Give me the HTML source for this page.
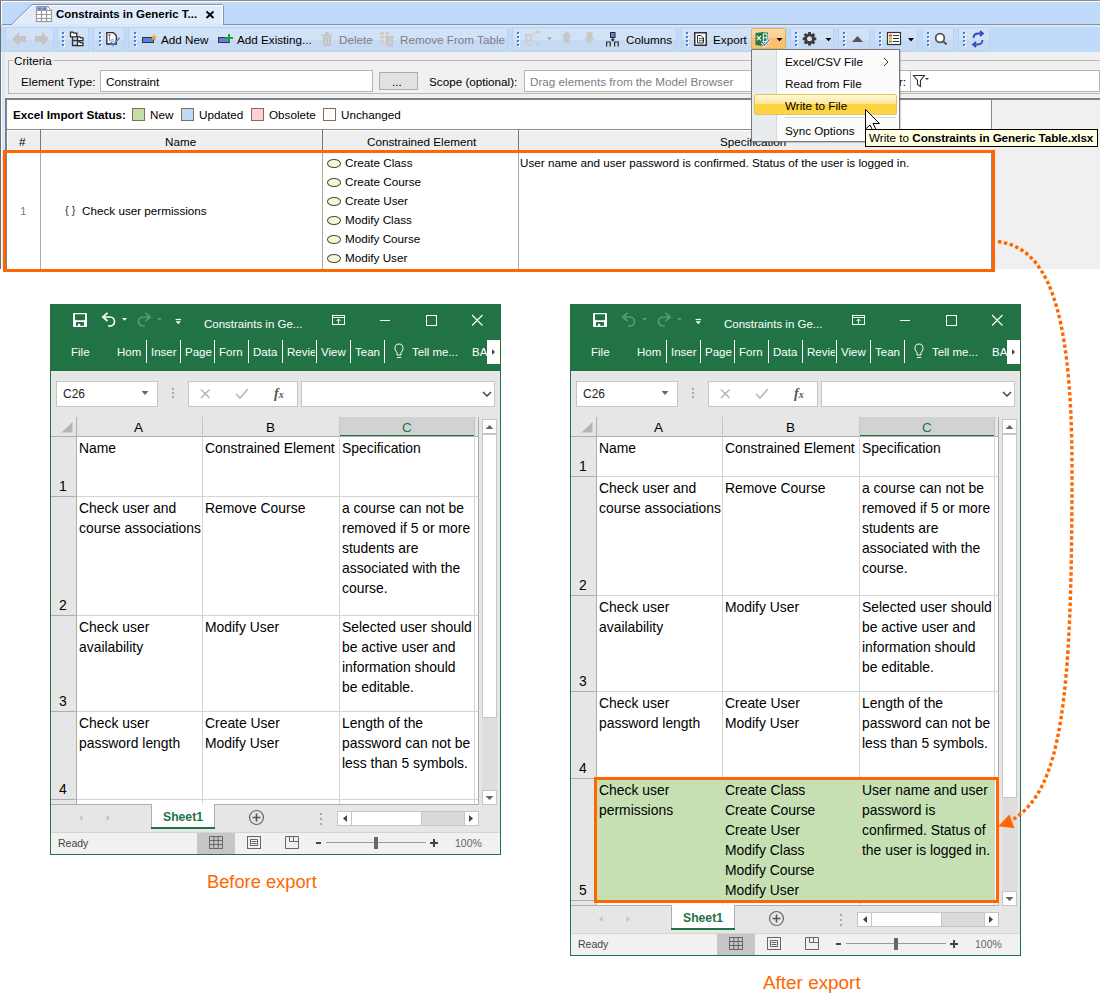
<!DOCTYPE html>
<html><head><meta charset="utf-8">
<style>
*{box-sizing:border-box;margin:0;padding:0}
html,body{width:1100px;height:1007px;overflow:hidden;background:#fff;font-family:"Liberation Sans",sans-serif;color:#000}
.a{position:absolute}
.t{position:absolute;white-space:nowrap;font-size:11.7px;line-height:14px}
.dis{color:#7d7d86}
.tbg{top:27px;height:25px;background:linear-gradient(#d1e2f7 0,#d1e2f7 52%,#c6daf3 52%,#c6daf3 100%);border:1px solid #b9d3f4}
.grip{top:31px;width:2px;height:15px;background:repeating-linear-gradient(#5a8fd8 0,#5a8fd8 2px,#fff 2px,#fff 4px)}
</style></head><body>

<!-- ============ MagicDraw window ============ -->
<div class="a" style="left:0;top:0;width:1100px;height:269px;background:#f0f0f0;border-top:1px solid #8c8c8c;border-left:1px solid #6e6e6e"></div>
<div class="a" style="left:1px;top:24px;width:4px;height:245px;background:#d8e7fb;border-left:1px solid #fff"></div>
<!-- tab strip -->
<div class="a" style="left:1px;top:1px;width:1099px;height:23px;background:#bfdafa;border-top:1px solid #fff;border-left:1px solid #fff"></div>
<div class="a" style="left:2px;top:24px;width:1098px;height:1px;background:#8c9298"></div>
<!-- tab -->
<div class="a" style="left:1px;top:25px;width:1099px;height:27px;background:linear-gradient(#d8e7fb 0,#d8e7fb 2px,#c0dafa 2px)"></div>
<svg class="a" style="left:0;top:0" width="240" height="27">
  <path d="M2 24.5 L11.5 24.5 L32 4.5 L221 4.5 Q223.5 4.5 223.5 7 L223.5 24.5 L240 24.5" fill="none" stroke="#8c9298" stroke-width="1"/>
  <path d="M12.5 25.5 L32.5 5.5 L222.5 5.5 L222.5 25.5 L12 27 Z" fill="#e0ecfc"/>
  <path d="M13 24.5 L32.5 5.5 L222.5 5.5 L222.5 24" fill="none" stroke="#fff" stroke-width="1"/>
  <rect x="12" y="24" width="211" height="3" fill="#d8e7fb"/>
</svg>

<div class="t" style="left:56px;top:7px;font-weight:bold;font-size:11.45px">Constraints in Generic T...</div>
<svg class="a" style="left:0;top:0" width="240" height="26">
 <rect x="36.5" y="6.5" width="15" height="15" fill="#fff" stroke="#9a9a9a" stroke-width="1.2"/>
 <path d="M41.5 6.5 v15 M46.5 6.5 v15 M36.5 10.5 h15 M36.5 14.5 h15 M36.5 18.5 h15" stroke="#9a9a9a" stroke-width="1.2"/>
 <rect x="37.3" y="7.3" width="3.6" height="2.6" fill="#5577e8"/>
 <rect x="42.3" y="7.3" width="3.6" height="2.6" fill="#5577e8"/>
 <path d="M48 6 h4 v4z" fill="#e3eefc"/>
 <path d="M47.5 6.5 l4 4" stroke="#9a9a9a" stroke-width="1"/>
 <path d="M206.5 11.5 l7 6.5 M213.5 11.5 l-7 6.5" stroke="#000" stroke-width="1.9"/>
</svg>
<!-- toolbar -->


<!-- toolbar groups -->
<div class="a tbg" style="left:5px;width:49px"></div>
<div class="a tbg" style="left:57px;width:32px"></div>
<div class="a tbg" style="left:93px;width:32px"></div>
<div class="a tbg" style="left:128px;width:380px"></div>
<div class="a tbg" style="left:512px;width:165px"></div>
<div class="a tbg" style="left:681px;width:106px"></div>
<div class="a tbg" style="left:790px;width:44px"></div>
<div class="a tbg" style="left:838px;width:32px"></div>
<div class="a tbg" style="left:874px;width:44px"></div>
<div class="a tbg" style="left:922px;width:32px"></div>
<div class="a tbg" style="left:958px;width:32px"></div>
<svg class="a" style="left:62px;top:31px" width="4" height="17"><rect x="1" y="2" width="2" height="2" fill="#fff"/><rect x="0" y="1" width="2" height="2" fill="#3f7fd6"/><rect x="1" y="6" width="2" height="2" fill="#fff"/><rect x="0" y="5" width="2" height="2" fill="#3f7fd6"/><rect x="1" y="10" width="2" height="2" fill="#fff"/><rect x="0" y="9" width="2" height="2" fill="#3f7fd6"/><rect x="1" y="14" width="2" height="2" fill="#fff"/><rect x="0" y="13" width="2" height="2" fill="#3f7fd6"/></svg>
<svg class="a" style="left:99px;top:31px" width="4" height="17"><rect x="1" y="2" width="2" height="2" fill="#fff"/><rect x="0" y="1" width="2" height="2" fill="#3f7fd6"/><rect x="1" y="6" width="2" height="2" fill="#fff"/><rect x="0" y="5" width="2" height="2" fill="#3f7fd6"/><rect x="1" y="10" width="2" height="2" fill="#fff"/><rect x="0" y="9" width="2" height="2" fill="#3f7fd6"/><rect x="1" y="14" width="2" height="2" fill="#fff"/><rect x="0" y="13" width="2" height="2" fill="#3f7fd6"/></svg>
<svg class="a" style="left:134px;top:31px" width="4" height="17"><rect x="1" y="2" width="2" height="2" fill="#fff"/><rect x="0" y="1" width="2" height="2" fill="#3f7fd6"/><rect x="1" y="6" width="2" height="2" fill="#fff"/><rect x="0" y="5" width="2" height="2" fill="#3f7fd6"/><rect x="1" y="10" width="2" height="2" fill="#fff"/><rect x="0" y="9" width="2" height="2" fill="#3f7fd6"/><rect x="1" y="14" width="2" height="2" fill="#fff"/><rect x="0" y="13" width="2" height="2" fill="#3f7fd6"/></svg>
<svg class="a" style="left:517px;top:31px" width="4" height="17"><rect x="1" y="2" width="2" height="2" fill="#fff"/><rect x="0" y="1" width="2" height="2" fill="#3f7fd6"/><rect x="1" y="6" width="2" height="2" fill="#fff"/><rect x="0" y="5" width="2" height="2" fill="#3f7fd6"/><rect x="1" y="10" width="2" height="2" fill="#fff"/><rect x="0" y="9" width="2" height="2" fill="#3f7fd6"/><rect x="1" y="14" width="2" height="2" fill="#fff"/><rect x="0" y="13" width="2" height="2" fill="#3f7fd6"/></svg>
<svg class="a" style="left:686px;top:31px" width="4" height="17"><rect x="1" y="2" width="2" height="2" fill="#fff"/><rect x="0" y="1" width="2" height="2" fill="#3f7fd6"/><rect x="1" y="6" width="2" height="2" fill="#fff"/><rect x="0" y="5" width="2" height="2" fill="#3f7fd6"/><rect x="1" y="10" width="2" height="2" fill="#fff"/><rect x="0" y="9" width="2" height="2" fill="#3f7fd6"/><rect x="1" y="14" width="2" height="2" fill="#fff"/><rect x="0" y="13" width="2" height="2" fill="#3f7fd6"/></svg>
<svg class="a" style="left:795px;top:31px" width="4" height="17"><rect x="1" y="2" width="2" height="2" fill="#fff"/><rect x="0" y="1" width="2" height="2" fill="#3f7fd6"/><rect x="1" y="6" width="2" height="2" fill="#fff"/><rect x="0" y="5" width="2" height="2" fill="#3f7fd6"/><rect x="1" y="10" width="2" height="2" fill="#fff"/><rect x="0" y="9" width="2" height="2" fill="#3f7fd6"/><rect x="1" y="14" width="2" height="2" fill="#fff"/><rect x="0" y="13" width="2" height="2" fill="#3f7fd6"/></svg>
<svg class="a" style="left:843px;top:31px" width="4" height="17"><rect x="1" y="2" width="2" height="2" fill="#fff"/><rect x="0" y="1" width="2" height="2" fill="#3f7fd6"/><rect x="1" y="6" width="2" height="2" fill="#fff"/><rect x="0" y="5" width="2" height="2" fill="#3f7fd6"/><rect x="1" y="10" width="2" height="2" fill="#fff"/><rect x="0" y="9" width="2" height="2" fill="#3f7fd6"/><rect x="1" y="14" width="2" height="2" fill="#fff"/><rect x="0" y="13" width="2" height="2" fill="#3f7fd6"/></svg>
<svg class="a" style="left:879px;top:31px" width="4" height="17"><rect x="1" y="2" width="2" height="2" fill="#fff"/><rect x="0" y="1" width="2" height="2" fill="#3f7fd6"/><rect x="1" y="6" width="2" height="2" fill="#fff"/><rect x="0" y="5" width="2" height="2" fill="#3f7fd6"/><rect x="1" y="10" width="2" height="2" fill="#fff"/><rect x="0" y="9" width="2" height="2" fill="#3f7fd6"/><rect x="1" y="14" width="2" height="2" fill="#fff"/><rect x="0" y="13" width="2" height="2" fill="#3f7fd6"/></svg>
<svg class="a" style="left:927px;top:31px" width="4" height="17"><rect x="1" y="2" width="2" height="2" fill="#fff"/><rect x="0" y="1" width="2" height="2" fill="#3f7fd6"/><rect x="1" y="6" width="2" height="2" fill="#fff"/><rect x="0" y="5" width="2" height="2" fill="#3f7fd6"/><rect x="1" y="10" width="2" height="2" fill="#fff"/><rect x="0" y="9" width="2" height="2" fill="#3f7fd6"/><rect x="1" y="14" width="2" height="2" fill="#fff"/><rect x="0" y="13" width="2" height="2" fill="#3f7fd6"/></svg>
<svg class="a" style="left:963px;top:31px" width="4" height="17"><rect x="1" y="2" width="2" height="2" fill="#fff"/><rect x="0" y="1" width="2" height="2" fill="#3f7fd6"/><rect x="1" y="6" width="2" height="2" fill="#fff"/><rect x="0" y="5" width="2" height="2" fill="#3f7fd6"/><rect x="1" y="10" width="2" height="2" fill="#fff"/><rect x="0" y="9" width="2" height="2" fill="#3f7fd6"/><rect x="1" y="14" width="2" height="2" fill="#fff"/><rect x="0" y="13" width="2" height="2" fill="#3f7fd6"/></svg>

<!-- toolbar icons -->
<svg class="a" style="left:0;top:24px" width="1000" height="28">
 <!-- back / fwd -->
 <path d="M12 15 L19 8 L19 12 L26 12 L26 18 L19 18 L19 22 Z" fill="#c4c4c4"/>
 <path d="M49 15 L42 8 L42 12 L35 12 L35 18 L42 18 L42 22 Z" fill="#c4c4c4"/>
 <!-- tree icon -->
 <g fill="#fff" stroke="#2a2a2a" stroke-width="1.3">
  <path d="M72.5 12.5 v9 h5 M72.5 16.5 h5" fill="none" stroke="#333"/>
  <path d="M70.5 8.2 h2.5 l1 1 h2.8 v3.6 h-6.3z"/>
  <path d="M77.5 12.8 h2.3 l1 1 h2.2 v2.8 h-5.5z"/>
  <path d="M77.5 17.8 h2.3 l1 1 h2.2 v2.8 h-5.5z"/>
 </g>
 <!-- doc with check -->
 <path d="M106.8 8.6 h6.5 l3 3 v8.4 h-9.5z" fill="#fff" stroke="#2a2a2a" stroke-width="1.3"/>
 <path d="M109.5 10.5 v6.5 M109.5 10 l-1 1 1 1 1-1z M112.5 15 l-1.5 1.5 1.5 1.5 1.5-1.5z" fill="none" stroke="#666" stroke-width="0.8"/>
 <path d="M110.8 18 l2.2 3.2 l6.5-7.5" fill="none" stroke="#4a86cf" stroke-width="1.7"/>
 <!-- add new -->
 <rect x="142.5" y="13.5" width="11" height="5" fill="#5a7fe0" stroke="#333" stroke-width="1"/>
 <path d="M154 10 l1 2.2 2.3.3-1.7 1.6.5 2.3-2.1-1.1-2.1 1.1.5-2.3-1.7-1.6 2.3-.3z" fill="#f5a623"/>
 <!-- add existing -->
 <rect x="218.5" y="13.5" width="11" height="5" fill="#5a7fe0" stroke="#333" stroke-width="1"/>
 <path d="M228 10 h2 v3 h3 v2 h-3 v3 h-2 v-3 h-3 v-2 h3z" fill="#1aa33a"/>
 <!-- trash disabled -->
 <path d="M322 10.5 h10 v2 h-10z M325.5 8 h3 v2.5 h-3z" fill="#c4c4c4"/>
 <path d="M323 13 h8 v8 q0 1-1 1 h-6 q-1 0-1-1z" fill="#c4c4c4"/>
 <path d="M325.5 14.5 v5.5 M328.5 14.5 v5.5" stroke="#d8d8d8" stroke-width="1"/>
 <!-- remove from table disabled -->
 <rect x="380" y="8" width="9" height="11" fill="#cdcdcd"/>
 <path d="M380 11.5 h9 M380 15 h9 M384.5 8 v11" stroke="#e2e2e2" stroke-width="1"/>
 <path d="M385 12 h9 v2 h-9z" fill="#c4c4c4"/>
 <path d="M386 14.5 h7 v7 q0 1-1 1 h-5 q-1 0-1-1z" fill="#c4c4c4"/>
 <path d="M388.3 15.5 v5 M390.7 15.5 v5" stroke="#d8d8d8" stroke-width="1"/>
 <!-- group5 disabled icon -->
 <rect x="525" y="10" width="7" height="7.5" fill="#cfcfcf"/>
 <path d="M528.5 11.8 v4 M526.5 13.8 h4" stroke="#e6e6e6" stroke-width="1"/>
 <path d="M532.5 10 h3 M532.5 17.5 h3" stroke="#d0d0d0" stroke-width="1"/>
 <path d="M535 9 l2.5-3 l2.5 3z M535 18.5 l2.5 3 l2.5-3z" fill="#cacaca"/>
 <path d="M537.5 10 v8" stroke="#d4d4d4" stroke-width="1" stroke-dasharray="1.5 1.5"/>
 <path d="M526 19 q2.5 3 5.5 1.5" fill="none" stroke="#cacaca" stroke-width="1"/>
 <path d="M547 13.5 h5 l-2.5 2.5z" fill="#9a9a9a"/>
 <path d="M566.5 7 l5.5 5.5 h-2.5 v6.5 h-6 v-6.5 h-2.5z" fill="#c8c8c8"/>
 <path d="M589.5 20 l5.5-5.5 h-2.5 v-6.5 h-6 v6.5 h-2.5z" fill="#c8c8c8"/>
 <!-- columns icon -->
 <rect x="610.5" y="8.5" width="4.5" height="5" fill="#5a82e6" stroke="#2a2a2a" stroke-width="1"/>
 <path d="M612.8 13.5 v3.5" stroke="#2a2a2a" stroke-width="1.2"/>
 <path d="M610.6 15.3 l2.2 2.4 l2.2-2.4z" fill="#2a2a2a"/>
 <path d="M606.6 22.5 v-4.5 h3.6 v4.5 M614.6 22.5 v-4.5 h3.6 v4.5" fill="none" stroke="#2a2a2a" stroke-width="1.2"/>
 <!-- export icon -->
 <rect x="694" y="8" width="13" height="14" fill="#333"/>
 <rect x="695.5" y="9.5" width="10" height="11" fill="#fff"/>
 <path d="M697.5 11.5 h3.5 l2.5 2.5 v5 h-6z" fill="none" stroke="#333" stroke-width="1"/>
 <rect x="699" y="14" width="1.6" height="1.2" fill="#333"/><rect x="701.4" y="14" width="1.6" height="1.2" fill="#333"/>
 <rect x="699" y="16.2" width="1.6" height="1.2" fill="#333"/><rect x="701.4" y="16.2" width="1.6" height="1.2" fill="#333"/>
</svg>
<!-- excel button highlight -->
<div class="a" style="left:751px;top:28px;width:35px;height:21px;border:1px solid #e5b25e;border-radius:2px;background:linear-gradient(#fcd7a8 0,#fbcf98 45%,#f9bd6c 50%,#f8c273 100%)"></div>
<svg class="a" style="left:0;top:24px" width="1000" height="28">
 <!-- excel icon -->
 <path d="M755.5 9 l8-1 v14 l-8-1z" fill="#1f7a44"/>
 <rect x="762" y="8.5" width="6" height="12" fill="#1f7a44"/>
 <rect x="763.3" y="10" width="3.6" height="7.5" fill="none" stroke="#fff" stroke-width="1"/>
 <path d="M763.3 13.7 h3.6" stroke="#fff" stroke-width="1"/>
 <path d="M756.8 11.8 l4.2 4.6 M761 11.8 l-4.2 4.6" stroke="#fff" stroke-width="1.2"/>
 <path d="M762 18.3 l2.5 3.2 l5.2-6" fill="none" stroke="#fff" stroke-width="2.8"/>
 <path d="M762 18.3 l2.5 3.2 l5.2-6" fill="none" stroke="#5d8ed6" stroke-width="1.4"/>
 <path d="M776.5 14 h6 l-3 3.2z" fill="#000"/>
 <!-- gear -->
 <g transform="translate(809.5,14.8)" fill="#3a3a3a">
  <circle r="3.9" fill="none" stroke="#3a3a3a" stroke-width="2.8"/>
  <rect x="-1.4" y="-6.8" width="2.8" height="13.6"/>
  <rect x="-6.8" y="-1.4" width="13.6" height="2.8"/>
  <rect x="-1.4" y="-6.8" width="2.8" height="13.6" transform="rotate(45)"/>
  <rect x="-1.4" y="-6.8" width="2.8" height="13.6" transform="rotate(-45)"/>
  <circle r="2.5" fill="#d3e4f9"/>
 </g>
 <path d="M825.5 14 h6 l-3 3.2z" fill="#000"/>
 <!-- up triangle -->
 <path d="M852 18 l5.5-6 l5.5 6z" fill="#555"/>
 <!-- list icon -->
 <rect x="887.5" y="8.5" width="13" height="12" fill="#fff" stroke="#333" stroke-width="1.2"/>
 <rect x="889" y="10.5" width="3" height="2" fill="#e83a2a"/>
 <rect x="889" y="13.5" width="3" height="2" fill="#f7941d"/>
 <rect x="889" y="16.5" width="3" height="2" fill="#5cb531"/>
 <path d="M893 11.5 h6 M893 14.5 h6 M893 17.5 h6" stroke="#333" stroke-width="1"/>
 <path d="M908 14 h6 l-3 3.5z" fill="#000"/>
 <!-- magnifier -->
 <circle cx="940" cy="14" r="4.3" fill="#fff" stroke="#555" stroke-width="1.8"/>
 <path d="M943 17 l3.5 3.5" stroke="#555" stroke-width="2"/>
 <!-- refresh -->
 <path d="M973.5 14 q0-4.5 5-4.5 h3 M980 7 l3 2.5 -3 2.5" fill="none" stroke="#2f4fbf" stroke-width="1.8"/>
 <path d="M982.5 16 q0 4.5 -5 4.5 h-3 M976 18 l-3 2.5 3 2.5" fill="none" stroke="#2f4fbf" stroke-width="1.8"/>
</svg>
<div class="t" style="left:161px;top:33px">Add New</div>
<div class="t" style="left:237px;top:33px">Add Existing...</div>
<div class="t dis" style="left:339px;top:33px">Delete</div>
<div class="t dis" style="left:400px;top:33px">Remove From Table</div>
<div class="t" style="left:626px;top:33px">Columns</div>
<div class="t" style="left:713px;top:33px">Export</div>

<!-- criteria -->
<div class="a" style="left:8px;top:60px;width:1092px;height:34px;border:1px solid #b9b9b9;border-right:none"></div>
<div class="t" style="left:13px;top:54px;background:#f0f0f0;padding:0 1px">Criteria</div>
<div class="t" style="left:21px;top:75px">Element Type:</div>
<div class="a" style="left:100px;top:70px;width:273px;height:22px;background:#fff;border:1px solid #b4b4b4"></div>
<div class="t" style="left:106px;top:75px">Constraint</div>
<div class="a" style="left:379px;top:72px;width:39px;height:18px;background:#e1e1e1;border:1px solid #adadad"></div>
<div class="t" style="left:392px;top:75px">...</div>
<div class="t" style="left:429px;top:75px">Scope (optional):</div>
<div class="a" style="left:524px;top:70px;width:576px;height:22px;background:#fff;border:1px solid #b4b4b4"></div>
<div class="t dis" style="left:530px;top:75px">Drag elements from the Model Browser</div>

<!-- filter -->
<div class="t" style="left:870px;top:75px;width:36px;text-align:right">Filter:</div>
<div class="a" style="left:910px;top:70px;width:190px;height:22px;background:#fff;border:1px solid #b4b4b4"></div>
<svg class="a" style="left:912px;top:72px" width="20" height="18"><path d="M1.5 3.5 h11 l-4 5 v6 l-3-2 v-4z" fill="none" stroke="#333" stroke-width="1.1"/><path d="M13 6 h4 l-2 2z" fill="#333"/></svg>

<!-- table panel -->
<div class="a" style="left:5px;top:98px;width:1095px;height:171px;background:#f0f0f0;border-top:2px solid #7c8088;border-left:2px solid #7c8088"></div>
<div class="a" style="left:7px;top:100px;width:985px;height:169px;background:#fff"></div>
<div class="a" style="left:991px;top:100px;width:1px;height:169px;background:#8a8a8a"></div>
<div class="t" style="left:13px;top:108px;font-weight:bold">Excel Import Status:</div>
<div class="a" style="left:132px;top:108px;width:13px;height:13px;background:#c4dfa8;border:1px solid #8a6a50"></div>
<div class="t" style="left:150px;top:108px">New</div>
<div class="a" style="left:181px;top:108px;width:13px;height:13px;background:#bddaf7;border:1px solid #8a6a50"></div>
<div class="t" style="left:199px;top:108px">Updated</div>
<div class="a" style="left:251px;top:108px;width:13px;height:13px;background:#fcd0d6;border:1px solid #8a6a50"></div>
<div class="t" style="left:269px;top:108px">Obsolete</div>
<div class="a" style="left:323px;top:108px;width:13px;height:13px;background:#fff;border:1px solid #8a6a50"></div>
<div class="t" style="left:341px;top:108px">Unchanged</div>

<!-- table header -->
<div class="a" style="left:7px;top:129px;width:985px;height:22px;background:#efefef;border-top:1px solid #8a8a8a;box-shadow:inset 1px 1px 0 #fff"></div>
<div class="a" style="left:40px;top:130px;width:1px;height:20px;background:#777"></div>
<div class="a" style="left:322px;top:130px;width:1px;height:20px;background:#777"></div>
<div class="a" style="left:518px;top:130px;width:1px;height:20px;background:#777"></div>
<div class="a" style="left:40px;top:150px;width:1px;height:119px;background:#a8a8a8"></div>
<div class="a" style="left:322px;top:150px;width:1px;height:119px;background:#a8a8a8"></div>
<div class="a" style="left:518px;top:150px;width:1px;height:119px;background:#a8a8a8"></div>
<div class="t" style="left:19px;top:135px">#</div>
<div class="t" style="left:165px;top:135px">Name</div>
<div class="t" style="left:367px;top:135px">Constrained Element</div>
<div class="t" style="left:720px;top:135px">Specification</div>

<!-- row -->
<div class="t" style="left:20px;top:204px;color:#7a7a90">1</div>
<div class="t" style="left:65px;top:203px;font-size:11px;color:#333">{ }</div>
<div class="t" style="left:82px;top:204px">Check user permissions</div>
<div class="t" style="left:345px;top:156px">Create Class</div>
<div class="t" style="left:345px;top:175px">Create Course</div>
<div class="t" style="left:345px;top:194px">Create User</div>
<div class="t" style="left:345px;top:213px">Modify Class</div>
<div class="t" style="left:345px;top:232px">Modify Course</div>
<div class="t" style="left:345px;top:251px">Modify User</div>
<div class="t" style="left:520px;top:156px">User name and user password is confirmed. Status of the user is logged in.</div>

<div class="a" style="left:327px;top:159px;width:14px;height:9px;border-radius:50%;background:#fbf7d2;border:1px solid #4a4a4a"></div>
<div class="a" style="left:327px;top:178px;width:14px;height:9px;border-radius:50%;background:#fbf7d2;border:1px solid #4a4a4a"></div>
<div class="a" style="left:327px;top:197px;width:14px;height:9px;border-radius:50%;background:#fbf7d2;border:1px solid #4a4a4a"></div>
<div class="a" style="left:327px;top:216px;width:14px;height:9px;border-radius:50%;background:#fbf7d2;border:1px solid #4a4a4a"></div>
<div class="a" style="left:327px;top:235px;width:14px;height:9px;border-radius:50%;background:#fbf7d2;border:1px solid #4a4a4a"></div>
<div class="a" style="left:327px;top:254px;width:14px;height:9px;border-radius:50%;background:#fbf7d2;border:1px solid #4a4a4a"></div>

<!-- orange highlight -->
<div class="a" style="left:3px;top:150px;width:992px;height:122px;border:3px solid #ff6600"></div>


<!-- menu -->
<div class="a" style="left:751px;top:49px;width:149px;height:93px;background:#fcfcfc;border:1px solid #777;box-shadow:1px 1px 1px rgba(0,0,0,0.15)"></div>
<div class="a" style="left:752px;top:50px;width:25px;height:91px;background:#e8ecee;border-right:1px solid #d5d9dc"></div>
<div class="a" style="left:754px;top:94px;width:143px;height:21px;border:1px solid #e6c262;border-radius:2px;background:linear-gradient(#fff8d8 0,#fde99a 45%,#fcd23e 50%,#fbd545 100%)"></div>
<div class="a" style="left:785px;top:117px;width:111px;height:1px;background:#d8d8d8"></div>
<div class="t" style="left:785px;top:55px">Excel/CSV File</div>
<svg class="a" style="left:882px;top:57px" width="8" height="10"><path d="M2 1 l4 4 -4 4" fill="none" stroke="#333" stroke-width="1"/></svg>
<div class="t" style="left:785px;top:77px">Read from File</div>
<div class="t" style="left:785px;top:99px">Write to File</div>
<div class="t" style="left:785px;top:124px">Sync Options</div>
<!-- cursor -->
<svg class="a" style="left:864px;top:108px" width="20" height="26"><path d="M1.5 1.5 L1.5 21 L6 17 L9.5 24 L12.5 22.5 L9 15.5 L15.5 15.5 Z" fill="#fff" stroke="#000" stroke-width="1"/></svg>
<!-- tooltip -->
<div class="a" style="left:865px;top:129px;width:233px;height:18px;background:#ffffe1;border:1px solid #000"></div>
<div class="t" style="left:869px;top:131px;font-size:11.7px">Write to <b style="letter-spacing:-0.1px">Constraints in Generic Table.xlsx</b></div>


<!-- excel left -->
<div class="a" style="left:50px;top:304px;width:451px;height:551px;background:#e6e6e6;border:1px solid #217346"></div>
<div class="a" style="left:50px;top:304px;width:451px;height:67px;background:#217346"></div>
<svg class="a" style="left:50px;top:304px" width="451" height="67">
 <rect x="23" y="9" width="14" height="14" rx="0.8" fill="#fff"/>
 <path d="M25 10.2 h10 v5.3 l-1 0.8 h-8 l-1-0.8z" fill="#217346"/>
 <rect x="26" y="18" width="8" height="3.8" fill="#217346"/>
 <rect x="28" y="19.8" width="2.2" height="2.2" fill="#fff"/>
 <g fill="none" stroke="#fff" stroke-width="1.7">
  <path d="M53 13 H60 A4.5 4.5 0 0 1 60 22 H58"/>
  <path d="M57.5 8.8 L52.8 13 L57.5 17"/>
 </g>
 <path d="M72 14 h5 l-2.5 2.7z" fill="#fff"/>
 <g fill="none" stroke="#5b9b74" stroke-width="1.7">
  <path d="M100 13 H93 A4.5 4.5 0 0 0 93 22 H95"/>
  <path d="M95.5 8.8 L100.2 13 L95.5 17"/>
 </g>
 <path d="M107 14 h5 l-2.5 2.7z" fill="#5b9b74"/>
 <path d="M125.6 15.5 h5.4" stroke="#fff" stroke-width="1.2"/>
 <path d="M125.6 17.3 h5.4 l-2.7 3z" fill="#fff"/>
 <rect x="282.5" y="11.5" width="12" height="9" fill="none" stroke="#fff" stroke-width="1"/>
 <path d="M282.5 13.5 h12" stroke="#fff" stroke-width="1"/>
 <path d="M288.5 19.5 v-4.5 M286.5 17 l2-2 2 2" fill="none" stroke="#fff" stroke-width="1"/>
 <path d="M330 16.5 h10" stroke="#fff" stroke-width="1"/>
 <rect x="376.5" y="11.5" width="10" height="10" fill="none" stroke="#fff" stroke-width="1"/>
 <path d="M422 11 l10.5 10.5 M432.5 11 l-10.5 10.5" stroke="#fff" stroke-width="1.1"/>
 <path d="M96.5 36 v23" stroke="#fff" stroke-width="1"/>
 <path d="M130.5 36 v23" stroke="#fff" stroke-width="1"/>
 <path d="M164.5 36 v23" stroke="#fff" stroke-width="1"/>
 <path d="M198.5 36 v23" stroke="#fff" stroke-width="1"/>
 <path d="M232.5 36 v23" stroke="#fff" stroke-width="1"/>
 <path d="M266.5 36 v23" stroke="#fff" stroke-width="1"/>
 <path d="M300.5 36 v23" stroke="#fff" stroke-width="1"/>
 <path d="M334.5 36 v23" stroke="#fff" stroke-width="1"/>
 <path d="M349 40 q-4 0-4 4.5 q0 2.5 2 4 v2.5 h4 v-2.5 q2-1.5 2-4 q0-4.5-4-4.5z M347 53.5 h4" fill="none" stroke="#fff" stroke-width="1"/>
 <rect x="437" y="36" width="13" height="24" fill="#fff"/>
 <path d="M442 45 l3 3 -3 3z" fill="#444"/>
</svg>
<div class="t" style="left:204px;top:317px;color:#fff;font-size:12px;font-size:11.5px">Constraints in Ge...</div>
<div class="t" style="left:71px;top:345px;color:#fff;font-size:12px;font-size:11.5px">File</div>
<div class="t" style="left:117px;top:345px;width:28px;overflow:hidden;color:#fff;font-size:12px;font-size:11.5px">Hom</div>
<div class="t" style="left:151px;top:345px;width:28px;overflow:hidden;color:#fff;font-size:12px;font-size:11.5px">Inser</div>
<div class="t" style="left:185px;top:345px;width:28px;overflow:hidden;color:#fff;font-size:12px;font-size:11.5px">Page</div>
<div class="t" style="left:219px;top:345px;width:28px;overflow:hidden;color:#fff;font-size:12px;font-size:11.5px">Forn</div>
<div class="t" style="left:253px;top:345px;width:28px;overflow:hidden;color:#fff;font-size:12px;font-size:11.5px">Data</div>
<div class="t" style="left:287px;top:345px;width:28px;overflow:hidden;color:#fff;font-size:12px;font-size:11.5px">Revie</div>
<div class="t" style="left:321px;top:345px;width:28px;overflow:hidden;color:#fff;font-size:12px;font-size:11.5px">View</div>
<div class="t" style="left:355px;top:345px;width:28px;overflow:hidden;color:#fff;font-size:12px;font-size:11.5px">Tean</div>
<div class="t" style="left:412px;top:345px;color:#fff;font-size:12px;font-size:11.5px">Tell me...</div>
<div class="t" style="left:472px;top:345px;width:15px;overflow:hidden;color:#fff;font-size:12px;font-size:11.5px">BA</div>
<div class="a" style="left:56px;top:381px;width:102px;height:26px;background:#fff;border:1px solid #c6c6c6"></div>
<div class="t" style="left:63px;top:387px;font-size:12px;color:#222">C26</div>
<div class="a" style="left:188px;top:381px;width:110px;height:26px;background:#fff;border:1px solid #c6c6c6"></div>
<div class="t" style="left:274px;top:387px;font-family:&quot;Liberation Serif&quot;,serif;font-size:14px;color:#555"><i><b>f</b><b style="font-size:10px">x</b></i></div>
<div class="a" style="left:301px;top:381px;width:194px;height:26px;background:#fff;border:1px solid #c6c6c6"></div>
<svg class="a" style="left:50px;top:374px" width="451" height="40">
 <path d="M91.5 17 h7 l-3.5 4z" fill="#666"/>
 <g fill="#aaa"><rect x="122" y="14" width="2" height="2"/><rect x="122" y="18" width="2" height="2"/><rect x="122" y="22" width="2" height="2"/></g>
 <path d="M151 15.5 l8.5 8.5 M159.5 15.5 l-8.5 8.5" stroke="#b0b0b0" stroke-width="1.4"/>
 <path d="M186 20 l4 4 l8-9" fill="none" stroke="#b8b8b8" stroke-width="1.7"/>
 <path d="M433 18 l4 4 4-4" fill="none" stroke="#444" stroke-width="1.5"/>
</svg>
<div class="a" style="left:51px;top:417px;width:427px;height:387px;background:#fff"></div>
<div class="a" style="left:51px;top:417px;width:427px;height:20px;background:#e6e6e6"></div>
<div class="a" style="left:339px;top:417px;width:135px;height:20px;background:#d2d2d2;border-bottom:2px solid #217346"></div>
<div class="a" style="left:51px;top:436px;width:26px;height:368px;background:#e6e6e6"></div>
<svg class="a" style="left:50px;top:417px" width="30" height="20"><path d="M11.5 15.5 h11 v-10.5z" fill="#b5b5b5"/></svg>
<div class="a" style="left:76px;top:417px;width:1px;height:387px;background:#aeaeae"></div>
<div class="a" style="left:51px;top:436px;width:427px;height:1px;background:#aeaeae"></div>
<div class="a" style="left:202px;top:417px;width:1px;height:20px;background:#c6c6c6"></div>
<div class="a" style="left:202px;top:437px;width:1px;height:367px;background:#d4d4d4"></div>
<div class="a" style="left:339px;top:417px;width:1px;height:20px;background:#c6c6c6"></div>
<div class="a" style="left:339px;top:437px;width:1px;height:367px;background:#d4d4d4"></div>
<div class="a" style="left:474px;top:417px;width:1px;height:20px;background:#c6c6c6"></div>
<div class="a" style="left:474px;top:437px;width:1px;height:367px;background:#d4d4d4"></div>
<div class="a" style="left:478px;top:417px;width:1px;height:387px;background:#aeaeae"></div>
<div class="t" style="left:134px;top:421px;font-size:13.5px;line-height:14px">A</div>
<div class="t" style="left:266px;top:421px;font-size:13.5px;line-height:14px">B</div>
<div class="t" style="left:402px;top:421px;font-size:13.5px;line-height:14px;color:#217346">C</div>
<div class="a" style="left:77px;top:496px;width:401px;height:1px;background:#d4d4d4"></div>
<div class="a" style="left:51px;top:496px;width:26px;height:1px;background:#aeaeae"></div>
<div class="t" style="left:59px;top:476px;font-size:13.9px;line-height:20px">1</div>
<div class="t" style="left:79px;top:438px;font-size:13.9px;line-height:20px">Name</div>
<div class="t" style="left:205px;top:438px;font-size:13.9px;line-height:20px">Constrained Element</div>
<div class="t" style="left:342px;top:438px;font-size:13.9px;line-height:20px">Specification</div>
<div class="a" style="left:77px;top:615px;width:401px;height:1px;background:#d4d4d4"></div>
<div class="a" style="left:51px;top:615px;width:26px;height:1px;background:#aeaeae"></div>
<div class="t" style="left:59px;top:595px;font-size:13.9px;line-height:20px">2</div>
<div class="t" style="left:79px;top:498px;font-size:13.9px;line-height:20px">Check user and<br>course associations</div>
<div class="t" style="left:205px;top:498px;font-size:13.9px;line-height:20px">Remove Course</div>
<div class="t" style="left:342px;top:498px;font-size:13.9px;line-height:20px">a course can not be<br>removed if 5 or more<br>students are<br>associated with the<br>course.</div>
<div class="a" style="left:77px;top:711px;width:401px;height:1px;background:#d4d4d4"></div>
<div class="a" style="left:51px;top:711px;width:26px;height:1px;background:#aeaeae"></div>
<div class="t" style="left:59px;top:691px;font-size:13.9px;line-height:20px">3</div>
<div class="t" style="left:79px;top:617px;font-size:13.9px;line-height:20px">Check user<br>availability</div>
<div class="t" style="left:205px;top:617px;font-size:13.9px;line-height:20px">Modify User</div>
<div class="t" style="left:342px;top:617px;font-size:13.9px;line-height:20px">Selected user should<br>be active user and<br>information should<br>be editable.</div>
<div class="a" style="left:77px;top:799px;width:401px;height:1px;background:#d4d4d4"></div>
<div class="a" style="left:51px;top:799px;width:26px;height:1px;background:#aeaeae"></div>
<div class="t" style="left:59px;top:779px;font-size:13.9px;line-height:20px">4</div>
<div class="t" style="left:79px;top:713px;font-size:13.9px;line-height:20px">Check user<br>password length</div>
<div class="t" style="left:205px;top:713px;font-size:13.9px;line-height:20px">Create User<br>Modify User</div>
<div class="t" style="left:342px;top:713px;font-size:13.9px;line-height:20px">Length of the<br>password can not be<br>less than 5 symbols.</div>
<div class="a" style="left:482px;top:419px;width:15px;height:386px;background:#dedede"></div>
<div class="a" style="left:482px;top:419px;width:15px;height:15px;background:#fff;border:1px solid #c6c6c6"></div>
<div class="a" style="left:482px;top:434px;width:15px;height:284px;background:#fff;border:1px solid #c6c6c6"></div>
<div class="a" style="left:482px;top:790px;width:15px;height:15px;background:#fff;border:1px solid #c6c6c6"></div>
<svg class="a" style="left:482px;top:419px" width="15" height="15"><path d="M3.5 10 h8 l-4-4z" fill="#666"/></svg>
<svg class="a" style="left:482px;top:790px" width="15" height="15"><path d="M3.5 6 h8 l-4 4z" fill="#666"/></svg>
<div class="a" style="left:51px;top:804px;width:428px;height:1px;background:#aeaeae"></div>
<div class="a" style="left:51px;top:805px;width:449px;height:27px;background:#e6e6e6"></div>
<div class="a" style="left:151px;top:804px;width:64px;height:25px;background:#fff;border-left:1px solid #aeaeae;border-right:1px solid #aeaeae"></div>
<div class="a" style="left:151px;top:827px;width:64px;height:2px;background:#217346"></div>
<div class="t" style="left:163px;top:810px;font-weight:bold;font-size:12.2px;color:#217346">Sheet1</div>
<svg class="a" style="left:50px;top:804px" width="451" height="28">
 <path d="M32.5 10.5 l-3.5 3.5 3.5 3.5z" fill="#c6c6c6"/>
 <path d="M56.5 10.5 l3.5 3.5 -3.5 3.5z" fill="#c6c6c6"/>
 <circle cx="206.5" cy="13.5" r="7" fill="none" stroke="#666" stroke-width="1.2"/>
 <path d="M202.5 13.5 h8 M206.5 9.5 v8" stroke="#555" stroke-width="1.6"/>
 <g fill="#aaa"><rect x="270" y="9" width="2" height="2"/><rect x="270" y="14" width="2" height="2"/><rect x="270" y="19" width="2" height="2"/></g>
</svg>
<div class="a" style="left:337px;top:811px;width:142px;height:15px;background:#dadada;border:1px solid #c6c6c6"></div>
<div class="a" style="left:337px;top:811px;width:15px;height:15px;background:#fff;border:1px solid #c6c6c6"></div>
<div class="a" style="left:351px;top:811px;width:71px;height:15px;background:#fff;border:1px solid #c6c6c6"></div>
<div class="a" style="left:464px;top:811px;width:15px;height:15px;background:#fff;border:1px solid #c6c6c6"></div>
<svg class="a" style="left:50px;top:804px" width="451" height="28">
 <path d="M297 11 l-4 3.5 4 3.5z" fill="#444"/>
 <path d="M419 11 l4 3.5 -4 3.5z" fill="#444"/>
</svg>
<div class="a" style="left:51px;top:832px;width:449px;height:22px;background:#f1f1f1;border-top:1px solid #d4d4d4"></div>
<div class="t" style="left:58px;top:836px;font-size:10.5px;color:#444">Ready</div>
<div class="a" style="left:197px;top:833px;width:38px;height:21px;background:#c6c6c6"></div>
<svg class="a" style="left:50px;top:832px" width="451" height="22">
 <g fill="none" stroke="#666" stroke-width="1">
  <rect x="159.5" y="4.5" width="13" height="12"/>
  <path d="M163.8 4.5 v12 M168.2 4.5 v12 M159.5 8.5 h13 M159.5 12.5 h13"/>
  <rect x="197.5" y="4.5" width="13" height="12"/>
  <path d="M200.5 7.5 h7 v6 h-7z M201.5 9.5 h5 M201.5 11.5 h5"/>
  <path d="M235.5 16.5 v-12 h13 v12z M239.5 4.5 v5 h4 v-5 M243.5 9.5 h5"/>
 </g>
 <path d="M266 11 h5" stroke="#444" stroke-width="2"/>
 <path d="M276 10.5 h100" stroke="#999" stroke-width="1"/>
 <rect x="324" y="5" width="4" height="12" fill="#666"/>
 <path d="M380 11 h8 M384 7 v8" stroke="#444" stroke-width="2"/>
</svg>
<div class="t" style="left:455px;top:836px;font-size:10.5px;color:#666">100%</div>
<!-- excel right -->
<div class="a" style="left:570px;top:304px;width:451px;height:652px;background:#e6e6e6;border:1px solid #217346"></div>
<div class="a" style="left:570px;top:304px;width:451px;height:67px;background:#217346"></div>
<svg class="a" style="left:570px;top:304px" width="451" height="67">
 <rect x="23" y="9" width="14" height="14" rx="0.8" fill="#fff"/>
 <path d="M25 10.2 h10 v5.3 l-1 0.8 h-8 l-1-0.8z" fill="#217346"/>
 <rect x="26" y="18" width="8" height="3.8" fill="#217346"/>
 <rect x="28" y="19.8" width="2.2" height="2.2" fill="#fff"/>
 <g fill="none" stroke="#5b9b74" stroke-width="1.7">
  <path d="M53 13 H60 A4.5 4.5 0 0 1 60 22 H58"/>
  <path d="M57.5 8.8 L52.8 13 L57.5 17"/>
 </g>
 <path d="M72 14 h5 l-2.5 2.7z" fill="#5b9b74"/>
 <g fill="none" stroke="#5b9b74" stroke-width="1.7">
  <path d="M100 13 H93 A4.5 4.5 0 0 0 93 22 H95"/>
  <path d="M95.5 8.8 L100.2 13 L95.5 17"/>
 </g>
 <path d="M107 14 h5 l-2.5 2.7z" fill="#5b9b74"/>
 <path d="M125.6 15.5 h5.4" stroke="#fff" stroke-width="1.2"/>
 <path d="M125.6 17.3 h5.4 l-2.7 3z" fill="#fff"/>
 <rect x="282.5" y="11.5" width="12" height="9" fill="none" stroke="#fff" stroke-width="1"/>
 <path d="M282.5 13.5 h12" stroke="#fff" stroke-width="1"/>
 <path d="M288.5 19.5 v-4.5 M286.5 17 l2-2 2 2" fill="none" stroke="#fff" stroke-width="1"/>
 <path d="M330 16.5 h10" stroke="#fff" stroke-width="1"/>
 <rect x="376.5" y="11.5" width="10" height="10" fill="none" stroke="#fff" stroke-width="1"/>
 <path d="M422 11 l10.5 10.5 M432.5 11 l-10.5 10.5" stroke="#fff" stroke-width="1.1"/>
 <path d="M96.5 36 v23" stroke="#fff" stroke-width="1"/>
 <path d="M130.5 36 v23" stroke="#fff" stroke-width="1"/>
 <path d="M164.5 36 v23" stroke="#fff" stroke-width="1"/>
 <path d="M198.5 36 v23" stroke="#fff" stroke-width="1"/>
 <path d="M232.5 36 v23" stroke="#fff" stroke-width="1"/>
 <path d="M266.5 36 v23" stroke="#fff" stroke-width="1"/>
 <path d="M300.5 36 v23" stroke="#fff" stroke-width="1"/>
 <path d="M334.5 36 v23" stroke="#fff" stroke-width="1"/>
 <path d="M349 40 q-4 0-4 4.5 q0 2.5 2 4 v2.5 h4 v-2.5 q2-1.5 2-4 q0-4.5-4-4.5z M347 53.5 h4" fill="none" stroke="#fff" stroke-width="1"/>
 <rect x="437" y="36" width="13" height="24" fill="#fff"/>
 <path d="M442 45 l3 3 -3 3z" fill="#444"/>
</svg>
<div class="t" style="left:724px;top:317px;color:#fff;font-size:12px;font-size:11.5px">Constraints in Ge...</div>
<div class="t" style="left:591px;top:345px;color:#fff;font-size:12px;font-size:11.5px">File</div>
<div class="t" style="left:637px;top:345px;width:28px;overflow:hidden;color:#fff;font-size:12px;font-size:11.5px">Hom</div>
<div class="t" style="left:671px;top:345px;width:28px;overflow:hidden;color:#fff;font-size:12px;font-size:11.5px">Inser</div>
<div class="t" style="left:705px;top:345px;width:28px;overflow:hidden;color:#fff;font-size:12px;font-size:11.5px">Page</div>
<div class="t" style="left:739px;top:345px;width:28px;overflow:hidden;color:#fff;font-size:12px;font-size:11.5px">Forn</div>
<div class="t" style="left:773px;top:345px;width:28px;overflow:hidden;color:#fff;font-size:12px;font-size:11.5px">Data</div>
<div class="t" style="left:807px;top:345px;width:28px;overflow:hidden;color:#fff;font-size:12px;font-size:11.5px">Revie</div>
<div class="t" style="left:841px;top:345px;width:28px;overflow:hidden;color:#fff;font-size:12px;font-size:11.5px">View</div>
<div class="t" style="left:875px;top:345px;width:28px;overflow:hidden;color:#fff;font-size:12px;font-size:11.5px">Tean</div>
<div class="t" style="left:932px;top:345px;color:#fff;font-size:12px;font-size:11.5px">Tell me...</div>
<div class="t" style="left:992px;top:345px;width:15px;overflow:hidden;color:#fff;font-size:12px;font-size:11.5px">BA</div>
<div class="a" style="left:576px;top:381px;width:102px;height:26px;background:#fff;border:1px solid #c6c6c6"></div>
<div class="t" style="left:583px;top:387px;font-size:12px;color:#222">C26</div>
<div class="a" style="left:708px;top:381px;width:110px;height:26px;background:#fff;border:1px solid #c6c6c6"></div>
<div class="t" style="left:794px;top:387px;font-family:&quot;Liberation Serif&quot;,serif;font-size:14px;color:#555"><i><b>f</b><b style="font-size:10px">x</b></i></div>
<div class="a" style="left:821px;top:381px;width:194px;height:26px;background:#fff;border:1px solid #c6c6c6"></div>
<svg class="a" style="left:570px;top:374px" width="451" height="40">
 <path d="M91.5 17 h7 l-3.5 4z" fill="#666"/>
 <g fill="#aaa"><rect x="122" y="14" width="2" height="2"/><rect x="122" y="18" width="2" height="2"/><rect x="122" y="22" width="2" height="2"/></g>
 <path d="M151 15.5 l8.5 8.5 M159.5 15.5 l-8.5 8.5" stroke="#b0b0b0" stroke-width="1.4"/>
 <path d="M186 20 l4 4 l8-9" fill="none" stroke="#b8b8b8" stroke-width="1.7"/>
 <path d="M433 18 l4 4 4-4" fill="none" stroke="#444" stroke-width="1.5"/>
</svg>
<div class="a" style="left:571px;top:417px;width:427px;height:488px;background:#fff"></div>
<div class="a" style="left:571px;top:417px;width:427px;height:20px;background:#e6e6e6"></div>
<div class="a" style="left:859px;top:417px;width:135px;height:20px;background:#d2d2d2;border-bottom:2px solid #217346"></div>
<div class="a" style="left:571px;top:436px;width:26px;height:469px;background:#e6e6e6"></div>
<svg class="a" style="left:570px;top:417px" width="30" height="20"><path d="M11.5 15.5 h11 v-10.5z" fill="#b5b5b5"/></svg>
<div class="a" style="left:596px;top:417px;width:1px;height:488px;background:#aeaeae"></div>
<div class="a" style="left:571px;top:436px;width:427px;height:1px;background:#aeaeae"></div>
<div class="a" style="left:722px;top:417px;width:1px;height:20px;background:#c6c6c6"></div>
<div class="a" style="left:722px;top:437px;width:1px;height:468px;background:#d4d4d4"></div>
<div class="a" style="left:859px;top:417px;width:1px;height:20px;background:#c6c6c6"></div>
<div class="a" style="left:859px;top:437px;width:1px;height:468px;background:#d4d4d4"></div>
<div class="a" style="left:994px;top:417px;width:1px;height:20px;background:#c6c6c6"></div>
<div class="a" style="left:994px;top:437px;width:1px;height:468px;background:#d4d4d4"></div>
<div class="a" style="left:998px;top:417px;width:1px;height:488px;background:#aeaeae"></div>
<div class="t" style="left:654px;top:421px;font-size:13.5px;line-height:14px">A</div>
<div class="t" style="left:786px;top:421px;font-size:13.5px;line-height:14px">B</div>
<div class="t" style="left:922px;top:421px;font-size:13.5px;line-height:14px;color:#217346">C</div>
<div class="a" style="left:597px;top:476px;width:401px;height:1px;background:#d4d4d4"></div>
<div class="a" style="left:571px;top:476px;width:26px;height:1px;background:#aeaeae"></div>
<div class="t" style="left:579px;top:456px;font-size:13.9px;line-height:20px">1</div>
<div class="t" style="left:599px;top:438px;font-size:13.9px;line-height:20px">Name</div>
<div class="t" style="left:725px;top:438px;font-size:13.9px;line-height:20px">Constrained Element</div>
<div class="t" style="left:862px;top:438px;font-size:13.9px;line-height:20px">Specification</div>
<div class="a" style="left:597px;top:595px;width:401px;height:1px;background:#d4d4d4"></div>
<div class="a" style="left:571px;top:595px;width:26px;height:1px;background:#aeaeae"></div>
<div class="t" style="left:579px;top:575px;font-size:13.9px;line-height:20px">2</div>
<div class="t" style="left:599px;top:478px;font-size:13.9px;line-height:20px">Check user and<br>course associations</div>
<div class="t" style="left:725px;top:478px;font-size:13.9px;line-height:20px">Remove Course</div>
<div class="t" style="left:862px;top:478px;font-size:13.9px;line-height:20px">a course can not be<br>removed if 5 or more<br>students are<br>associated with the<br>course.</div>
<div class="a" style="left:597px;top:691px;width:401px;height:1px;background:#d4d4d4"></div>
<div class="a" style="left:571px;top:691px;width:26px;height:1px;background:#aeaeae"></div>
<div class="t" style="left:579px;top:671px;font-size:13.9px;line-height:20px">3</div>
<div class="t" style="left:599px;top:597px;font-size:13.9px;line-height:20px">Check user<br>availability</div>
<div class="t" style="left:725px;top:597px;font-size:13.9px;line-height:20px">Modify User</div>
<div class="t" style="left:862px;top:597px;font-size:13.9px;line-height:20px">Selected user should<br>be active user and<br>information should<br>be editable.</div>
<div class="a" style="left:597px;top:778px;width:401px;height:1px;background:#d4d4d4"></div>
<div class="a" style="left:571px;top:778px;width:26px;height:1px;background:#aeaeae"></div>
<div class="t" style="left:579px;top:758px;font-size:13.9px;line-height:20px">4</div>
<div class="t" style="left:599px;top:693px;font-size:13.9px;line-height:20px">Check user<br>password length</div>
<div class="t" style="left:725px;top:693px;font-size:13.9px;line-height:20px">Create User<br>Modify User</div>
<div class="t" style="left:862px;top:693px;font-size:13.9px;line-height:20px">Length of the<br>password can not be<br>less than 5 symbols.</div>
<div class="a" style="left:597px;top:779px;width:397px;height:121px;background:#c6e0b4"></div>
<div class="a" style="left:597px;top:900px;width:401px;height:1px;background:#d4d4d4"></div>
<div class="a" style="left:571px;top:900px;width:26px;height:1px;background:#aeaeae"></div>
<div class="t" style="left:579px;top:880px;font-size:13.9px;line-height:20px">5</div>
<div class="t" style="left:599px;top:780px;font-size:13.9px;line-height:20px">Check user<br>permissions</div>
<div class="t" style="left:725px;top:780px;font-size:13.9px;line-height:20px">Create Class<br>Create Course<br>Create User<br>Modify Class<br>Modify Course<br>Modify User</div>
<div class="t" style="left:862px;top:780px;font-size:13.9px;line-height:20px">User name and user<br>password is<br>confirmed. Status of<br>the user is logged in.</div>
<div class="a" style="left:1002px;top:419px;width:15px;height:487px;background:#dedede"></div>
<div class="a" style="left:1002px;top:419px;width:15px;height:15px;background:#fff;border:1px solid #c6c6c6"></div>
<div class="a" style="left:1002px;top:434px;width:15px;height:364px;background:#fff;border:1px solid #c6c6c6"></div>
<div class="a" style="left:1002px;top:891px;width:15px;height:15px;background:#fff;border:1px solid #c6c6c6"></div>
<svg class="a" style="left:1002px;top:419px" width="15" height="15"><path d="M3.5 10 h8 l-4-4z" fill="#666"/></svg>
<svg class="a" style="left:1002px;top:891px" width="15" height="15"><path d="M3.5 6 h8 l-4 4z" fill="#666"/></svg>
<div class="a" style="left:571px;top:905px;width:428px;height:1px;background:#aeaeae"></div>
<div class="a" style="left:571px;top:906px;width:449px;height:27px;background:#e6e6e6"></div>
<div class="a" style="left:671px;top:905px;width:64px;height:25px;background:#fff;border-left:1px solid #aeaeae;border-right:1px solid #aeaeae"></div>
<div class="a" style="left:671px;top:928px;width:64px;height:2px;background:#217346"></div>
<div class="t" style="left:683px;top:911px;font-weight:bold;font-size:12.2px;color:#217346">Sheet1</div>
<svg class="a" style="left:570px;top:905px" width="451" height="28">
 <path d="M32.5 10.5 l-3.5 3.5 3.5 3.5z" fill="#c6c6c6"/>
 <path d="M56.5 10.5 l3.5 3.5 -3.5 3.5z" fill="#c6c6c6"/>
 <circle cx="206.5" cy="13.5" r="7" fill="none" stroke="#666" stroke-width="1.2"/>
 <path d="M202.5 13.5 h8 M206.5 9.5 v8" stroke="#555" stroke-width="1.6"/>
 <g fill="#aaa"><rect x="270" y="9" width="2" height="2"/><rect x="270" y="14" width="2" height="2"/><rect x="270" y="19" width="2" height="2"/></g>
</svg>
<div class="a" style="left:857px;top:912px;width:142px;height:15px;background:#dadada;border:1px solid #c6c6c6"></div>
<div class="a" style="left:857px;top:912px;width:15px;height:15px;background:#fff;border:1px solid #c6c6c6"></div>
<div class="a" style="left:871px;top:912px;width:71px;height:15px;background:#fff;border:1px solid #c6c6c6"></div>
<div class="a" style="left:984px;top:912px;width:15px;height:15px;background:#fff;border:1px solid #c6c6c6"></div>
<svg class="a" style="left:570px;top:905px" width="451" height="28">
 <path d="M297 11 l-4 3.5 4 3.5z" fill="#444"/>
 <path d="M419 11 l4 3.5 -4 3.5z" fill="#444"/>
</svg>
<div class="a" style="left:571px;top:933px;width:449px;height:22px;background:#f1f1f1;border-top:1px solid #d4d4d4"></div>
<div class="t" style="left:578px;top:937px;font-size:10.5px;color:#444">Ready</div>
<div class="a" style="left:717px;top:934px;width:38px;height:21px;background:#c6c6c6"></div>
<svg class="a" style="left:570px;top:933px" width="451" height="22">
 <g fill="none" stroke="#666" stroke-width="1">
  <rect x="159.5" y="4.5" width="13" height="12"/>
  <path d="M163.8 4.5 v12 M168.2 4.5 v12 M159.5 8.5 h13 M159.5 12.5 h13"/>
  <rect x="197.5" y="4.5" width="13" height="12"/>
  <path d="M200.5 7.5 h7 v6 h-7z M201.5 9.5 h5 M201.5 11.5 h5"/>
  <path d="M235.5 16.5 v-12 h13 v12z M239.5 4.5 v5 h4 v-5 M243.5 9.5 h5"/>
 </g>
 <path d="M266 11 h5" stroke="#444" stroke-width="2"/>
 <path d="M276 10.5 h100" stroke="#999" stroke-width="1"/>
 <rect x="324" y="5" width="4" height="12" fill="#666"/>
 <path d="M380 11 h8 M384 7 v8" stroke="#444" stroke-width="2"/>
</svg>
<div class="t" style="left:975px;top:937px;font-size:10.5px;color:#666">100%</div>
<div class="a" style="left:594px;top:777px;width:405px;height:126px;border:3px solid #ff6600"></div>
<div class="t" style="left:207px;top:872px;font-size:18.3px;line-height:20px;color:#ff6600">Before export</div>
<div class="t" style="left:763px;top:973px;font-size:18.9px;line-height:20px;color:#ff6600">After export</div>
<svg class="a" style="left:0;top:0" width="1100" height="1007">
 <path d="M998 241.5 C1045 248 1072 300 1072 470 C1072 700 1062 790 1012 820" fill="none" stroke="#ff6600" stroke-width="3.4" stroke-dasharray="3.4 2.6"/>
 <path d="M998.2 826.3 L1009.4 814.5 L1014.5 828.2 Z" fill="#ff6600"/>
</svg>
</body></html>
